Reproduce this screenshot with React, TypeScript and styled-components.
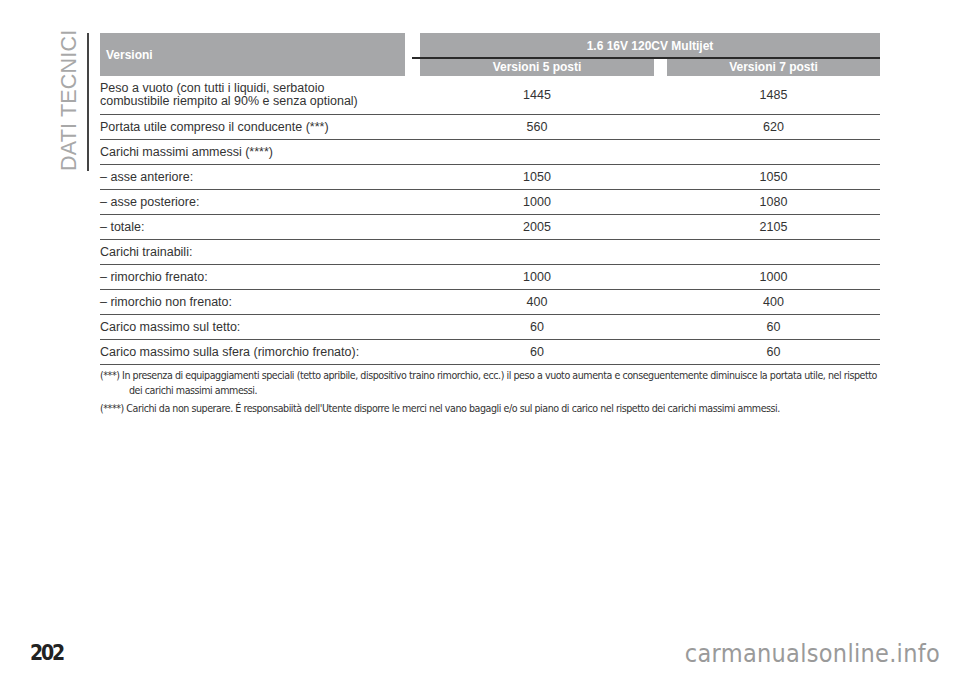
import React from 'react';
import styled, { createGlobalStyle } from 'styled-components';

const Global = createGlobalStyle`
  body { margin: 0; background: #fff; font-family: "Liberation Sans", Arial, sans-serif; color: #333; }
`;

const Page = styled.div`
  width: 960px;
  height: 678px;
  display: flex;
  flex-direction: column;
  overflow: hidden;
`;

const Top = styled.div`
  display: flex;
  padding-top: 33px;
  flex: 1;
`;

const Side = styled.div`
  flex: 0 0 100px;
  display: flex;
  align-items: flex-start;
  padding-left: 57px;
  box-sizing: border-box;
`;

const SideTitle = styled.div`
  writing-mode: vertical-rl;
  transform: rotate(180deg);
  font-size: 21.5px;
  font-weight: 300;
  color: #a8a8a8;
  letter-spacing: 0.2px;
  line-height: 24px;
  height: 138px;
  white-space: nowrap;
  text-align: right;
`;

const SideRule = styled.div`
  flex: 0 0 2px;
  height: 138px;
  background: #444;
  margin-left: 6px;
`;

const Main = styled.div`
  width: 780px;
`;

const cols = '305px 15px 234px 13px 213px';

const Head = styled.div`
  display: grid;
  grid-template-columns: ${cols};
  grid-template-rows: 25px 18px;
`;

const HeadCell = styled.div<{ $col: string; $row: string; $align?: string }>`
  grid-column: ${p => p.$col};
  grid-row: ${p => p.$row};
  background: #a6a7a9;
  color: #fff;
  font-weight: bold;
  font-size: 12px;
  display: flex;
  align-items: center;
  justify-content: ${p => p.$align || 'center'};
  padding-left: ${p => (p.$align ? '6px' : '0')};
`;

const HeadRule = styled.div`
  grid-column: 2 / 6;
  grid-row: 2;
  align-self: start;
  margin-left: 7px;
  height: 2px;
  margin-top: -1px;
  background: #2a2a2a;
`;

const Row = styled.div<{ $h: number }>`
  display: grid;
  grid-template-columns: ${cols};
  height: ${p => p.$h}px;
  align-items: center;
  border-bottom: 1px solid #555;
  font-size: 12.5px;
  line-height: 13px;
`;

const Label = styled.div`
  grid-column: 1;
`;

const Value = styled.div<{ $col: number }>`
  grid-column: ${p => p.$col};
  text-align: center;
`;

const Notes = styled.div`
  font-family: "DejaVu Sans Condensed", "Liberation Sans", sans-serif;
  font-size: 10.6px;
  line-height: 15px;
  color: #333;
  padding-top: 3px;
  letter-spacing: -0.45px;
`;

const Note = styled.div<{ $indent: number }>`
  padding-left: ${p => p.$indent}px;
  text-indent: -${p => p.$indent}px;
  margin-bottom: 3px;
`;

const Footer = styled.div`
  display: flex;
  justify-content: space-between;
  align-items: flex-end;
  padding: 0 20px 10px 30px;
`;

const PageNum = styled.div`
  font-family: "DejaVu Sans Condensed", sans-serif;
  font-weight: bold;
  font-size: 21px;
  color: #222;
  letter-spacing: -2.2px;
  margin-bottom: 3px;
`;

const Mark = styled.div`
  font-family: "DejaVu Sans Condensed", sans-serif;
  font-size: 25px;
  color: #9a9a9a;
  letter-spacing: 0.3px;
`;

const rows: [string, string, string, number][] = [
  ['Peso a vuoto (con tutti i liquidi, serbatoio\ncombustibile riempito al 90% e senza optional)', '1445', '1485', 38],
  ['Portata utile compreso il conducente (***)', '560', '620', 24],
  ['Carichi massimi ammessi (****)', '', '', 24],
  ['– asse anteriore:', '1050', '1050', 24],
  ['– asse posteriore:', '1000', '1080', 24],
  ['– totale:', '2005', '2105', 24],
  ['Carichi trainabili:', '', '', 24],
  ['– rimorchio frenato:', '1000', '1000', 24],
  ['– rimorchio non frenato:', '400', '400', 24],
  ['Carico massimo sul tetto:', '60', '60', 24],
  ['Carico massimo sulla sfera (rimorchio frenato):', '60', '60', 24],
];

export default function App() {
  return (
    <Page>
      <Global />
      <Top>
        <Side>
          <SideTitle>DATI TECNICI</SideTitle>
          <SideRule />
        </Side>
        <Main>
          <Head>
            <HeadCell $col="1" $row="1 / 3" $align="flex-start">Versioni</HeadCell>
            <HeadCell $col="3 / 6" $row="1">1.6 16V 120CV Multijet</HeadCell>
            <HeadCell $col="3" $row="2">Versioni 5 posti</HeadCell>
            <HeadCell $col="5" $row="2">Versioni 7 posti</HeadCell>
            <HeadRule />
          </Head>
          {rows.map(([label, a, b, h]) => (
            <Row key={label} $h={h}>
              <Label>
                {label.split('\n').map((l, i) => (
                  <div key={i}>{l}</div>
                ))}
              </Label>
              <Value $col={3}>{a}</Value>
              <Value $col={5}>{b}</Value>
            </Row>
          ))}
          <Notes>
            <Note $indent={29}>
              (***) In presenza di equipaggiamenti speciali (tetto apribile, dispositivo traino rimorchio, ecc.) il peso a vuoto aumenta e conseguentemente diminuisce la portata utile, nel rispetto dei carichi massimi ammessi.
            </Note>
            <Note $indent={0}>
              (****) Carichi da non superare. É responsabiità dell'Utente disporre le merci nel vano bagagli e/o sul piano di carico nel rispetto dei carichi massimi ammessi.
            </Note>
          </Notes>
        </Main>
      </Top>
      <Footer>
        <PageNum>202</PageNum>
        <Mark>carmanualsonline.info</Mark>
      </Footer>
    </Page>
  );
}
